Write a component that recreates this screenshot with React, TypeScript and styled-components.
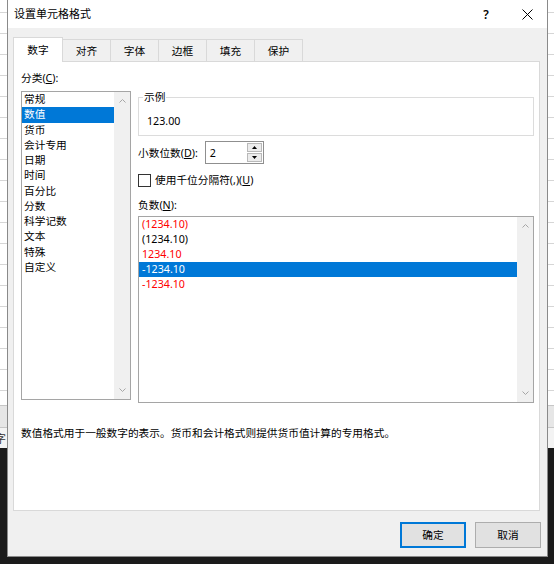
import React from "react";
import styled, { createGlobalStyle } from "styled-components";

const GlobalStyle = createGlobalStyle`
  html, body { margin: 0; padding: 0; }
  body {
    width: 554px;
    height: 564px;
    overflow: hidden;
    font-family: "Noto Sans", "Noto Sans CJK SC", sans-serif;
  }
`;

const Desktop = styled.div`
  position: relative;
  width: 554px;
  height: 564px;
  display: flex;
  flex-direction: column;
  overflow: hidden;
  background: #1b1b1b;
`;

const Sheet = styled.div`
  height: 405px;
  background: repeating-linear-gradient(
    to bottom,
    #ffffff 0 12px,
    #d6d6d6 12px 13px,
    #ffffff 13px 21px
  );
`;

const SheetTabs = styled.div`
  height: 21px;
  background: #e6e6e6;
  border-top: 1px solid #c6c6c6;
  border-bottom: 1px solid #c6c6c6;
`;

const StatusRow = styled.div`
  height: 20px;
  background: #f3f3f3;
  display: flex;
  align-items: center;
  font-size: 11px;
  color: #333;
`;

const StatusText = styled.span`
  margin-left: -5px;
`;

const Dialog = styled.div`
  position: absolute;
  left: 7px;
  top: 0;
  width: 541px;
  height: 557px;
  box-sizing: border-box;
  border: 1px solid #8a8a8a;
  border-top: none;
  background: #f0f0f0;
  display: flex;
  flex-direction: column;
  font-family: "Noto Sans", "Noto Sans CJK SC", sans-serif;
  font-size: 10.7px;
  color: #000;
`;

const TitleBar = styled.div`
  height: 28px;
  flex: none;
  background: #ffffff;
  display: flex;
  align-items: center;
  padding-left: 6px;
`;

const Title = styled.div`
  flex: 1;
  font-size: 11px;
  line-height: 16px;
`;

const TitleButton = styled.div<{ $w: number }>`
  width: ${(p) => p.$w}px;
  height: 28px;
  display: flex;
  align-items: center;
  justify-content: center;
  font-size: 12px;
  font-weight: 600;
`;

const TabStrip = styled.div`
  display: flex;
  align-items: flex-end;
  height: 25px;
  margin: 9px 0 -1px 5px;
  position: relative;
  z-index: 1;
`;

const Tab = styled.div<{ $active?: boolean }>`
  box-sizing: border-box;
  width: ${(p) => (p.$active ? 50 : 49)}px;
  height: ${(p) => (p.$active ? 25 : 23)}px;
  margin-left: -1px;
  &:first-child { margin-left: 0; }
  border: 1px solid #d9d9d9;
  border-bottom: ${(p) => (p.$active ? "none" : "1px solid #d9d9d9")};
  background: ${(p) => (p.$active ? "#ffffff" : "#f0f0f0")};
  display: flex;
  align-items: center;
  justify-content: center;
  padding-top: ${(p) => (p.$active ? 0 : 1)}px;
  line-height: 16px;
`;

const Panel = styled.div`
  box-sizing: border-box;
  height: 450px;
  margin: 0 7px 0 5px;
  border: 1px solid #d9d9d9;
  background: #ffffff;
  padding: 8px 5px 0 7px;
  display: flex;
  flex-direction: column;
`;

const Columns = styled.div`
  display: flex;
  align-items: flex-start;
  gap: 7px;
`;

const LeftCol = styled.div`
  width: 110px;
  display: flex;
  flex-direction: column;
`;

const RightCol = styled.div`
  flex: 1;
  min-width: 0;
  padding-top: 19px;
  display: flex;
  flex-direction: column;
`;

const FieldLabel = styled.div<{ $mt?: number }>`
  line-height: 16px;
  height: 16px;
  margin-top: ${(p) => p.$mt ?? 0}px;
  white-space: nowrap;
`;

const ListBox = styled.div<{ $h: number; $mt: number }>`
  box-sizing: border-box;
  height: ${(p) => p.$h}px;
  margin-top: ${(p) => p.$mt}px;
  border: 1px solid #a5a5a5;
  background: #ffffff;
  display: flex;
`;

const Items = styled.div`
  flex: 1;
  min-width: 0;
  overflow: hidden;
`;

const Item = styled.div<{ $selected?: boolean; $red?: boolean; $pad: number; $h: number }>`
  height: ${(p) => p.$h}px;
  line-height: ${(p) => p.$h}px;
  padding-left: ${(p) => p.$pad}px;
  white-space: nowrap;
  background: ${(p) => (p.$selected ? "#0078d7" : "transparent")};
  color: ${(p) => (p.$selected ? "#ffffff" : p.$red ? "#ff0000" : "#000000")};
`;

const ScrollTrack = styled.div`
  width: 16px;
  flex: none;
  background: #f0f0f0;
  display: flex;
  flex-direction: column;
  align-items: center;
  justify-content: space-between;
  padding: 7px 0;
  box-sizing: border-box;
`;

const GroupBox = styled.fieldset`
  margin: 0;
  padding: 0 0 6px 0;
  border: 1px solid #dcdcdc;
  min-inline-size: 0;
`;

const GroupLegend = styled.legend`
  margin-left: 4px;
  padding: 0 1px;
  line-height: 16px;
  font-size: 10.7px;
`;

const SampleValue = styled.div`
  padding: 8px 0 0 8px;
  line-height: 16px;
`;

const SpinRow = styled.div`
  margin-top: 5px;
  height: 23px;
  display: flex;
  align-items: center;
  gap: 7px;
`;

const SpinBox = styled.div`
  box-sizing: border-box;
  width: 59px;
  height: 23px;
  border: 1px solid #8f8f8f;
  background: #ffffff;
  display: flex;
  align-items: stretch;
  padding: 0 1px 0 4px;
`;

const SpinValue = styled.div`
  flex: 1;
  display: flex;
  align-items: center;
  line-height: 16px;
`;

const SpinButtons = styled.div`
  width: 15px;
  display: flex;
  flex-direction: column;
  padding: 1px 0;
  gap: 1px;
`;

const SpinButton = styled.div`
  flex: 1;
  box-sizing: border-box;
  border: 1px solid #b9b9b9;
  background: #ececec;
  display: flex;
  align-items: center;
  justify-content: center;
`;

const CheckRow = styled.div`
  margin-top: 8px;
  height: 16px;
  display: flex;
  align-items: center;
  gap: 4px;
  line-height: 16px;
`;

const CheckBox = styled.div`
  box-sizing: border-box;
  width: 13px;
  height: 13px;
  border: 1px solid #333333;
  background: #ffffff;
`;

const Description = styled.div`
  margin-top: 22px;
  line-height: 16px;
  white-space: nowrap;
`;

const ButtonRow = styled.div`
  display: flex;
  justify-content: flex-end;
  gap: 9px;
  padding: 11px 6px 0 0;
`;

const DialogButton = styled.div<{ $primary?: boolean }>`
  box-sizing: border-box;
  width: 66px;
  height: 26px;
  background: #e1e1e1;
  border: ${(p) => (p.$primary ? "2px solid #0078d7" : "1px solid #adadad")};
  display: flex;
  align-items: center;
  justify-content: center;
  line-height: 16px;
`;

const Key = styled.u`
  text-decoration: underline;
  text-underline-offset: 1px;
`;

const Chevron = ({ up }: { up?: boolean }) => (
  <svg width="7" height="4" viewBox="0 0 7 4">
    <polyline
      points={up ? "0.5,3.5 3.5,0.5 6.5,3.5" : "0.5,0.5 3.5,3.5 6.5,0.5"}
      fill="none"
      stroke="#a6a6a6"
      strokeWidth="1"
    />
  </svg>
);

const Triangle = ({ up }: { up?: boolean }) => (
  <svg width="5" height="3" viewBox="0 0 5 3">
    <polygon points={up ? "0,3 5,3 2.5,0" : "0,0 5,0 2.5,3"} fill="#000" />
  </svg>
);

const CloseIcon = () => (
  <svg width="11" height="11" viewBox="0 0 11 11">
    <path d="M0.5 0.5 L10.5 10.5 M10.5 0.5 L0.5 10.5" stroke="#000" strokeWidth="1" />
  </svg>
);

const tabs = ["数字", "对齐", "字体", "边框", "填充", "保护"];
const categories = [
  "常规",
  "数值",
  "货币",
  "会计专用",
  "日期",
  "时间",
  "百分比",
  "分数",
  "科学记数",
  "文本",
  "特殊",
  "自定义",
];
const negatives = [
  { text: "(1234.10)", red: true },
  { text: "(1234.10)", red: false },
  { text: "1234.10", red: true },
  { text: "-1234.10", red: false, selected: true },
  { text: "-1234.10", red: true },
];

export default function App() {
  return (
    <>
      <GlobalStyle />
      <Desktop lang="zh-CN">
        <Sheet />
        <SheetTabs />
        <StatusRow>
          <StatusText>字</StatusText>
        </StatusRow>
        <Dialog>
          <TitleBar>
            <Title>设置单元格格式</Title>
            <TitleButton $w={42}>?</TitleButton>
            <TitleButton $w={40}>
              <CloseIcon />
            </TitleButton>
          </TitleBar>
          <TabStrip>
            {tabs.map((t, i) => (
              <Tab key={t} $active={i === 0}>
                {t}
              </Tab>
            ))}
          </TabStrip>
          <Panel>
            <Columns>
              <LeftCol>
                <FieldLabel>
                  分类(<Key>C</Key>):
                </FieldLabel>
                <ListBox $h={309} $mt={5}>
                  <Items>
                    {categories.map((c, i) => (
                      <Item key={c} $pad={2} $h={15.25} $selected={i === 1}>
                        {c}
                      </Item>
                    ))}
                  </Items>
                  <ScrollTrack>
                    <Chevron up />
                    <Chevron />
                  </ScrollTrack>
                </ListBox>
              </LeftCol>
              <RightCol>
                <GroupBox>
                  <GroupLegend>示例</GroupLegend>
                  <SampleValue>123.00</SampleValue>
                </GroupBox>
                <SpinRow>
                  <FieldLabel>
                    小数位数(<Key>D</Key>):
                  </FieldLabel>
                  <SpinBox>
                    <SpinValue>2</SpinValue>
                    <SpinButtons>
                      <SpinButton>
                        <Triangle up />
                      </SpinButton>
                      <SpinButton>
                        <Triangle />
                      </SpinButton>
                    </SpinButtons>
                  </SpinBox>
                </SpinRow>
                <CheckRow>
                  <CheckBox />
                  <span>
                    使用千位分隔符(,)(<Key>U</Key>)
                  </span>
                </CheckRow>
                <FieldLabel $mt={9}>
                  负数(<Key>N</Key>):
                </FieldLabel>
                <ListBox $h={187} $mt={3}>
                  <Items>
                    {negatives.map((n, i) => (
                      <Item key={i} $pad={3} $h={15} $red={n.red} $selected={n.selected}>
                        {n.text}
                      </Item>
                    ))}
                  </Items>
                  <ScrollTrack>
                    <Chevron up />
                    <Chevron />
                  </ScrollTrack>
                </ListBox>
              </RightCol>
            </Columns>
            <Description>
              数值格式用于一般数字的表示。货币和会计格式则提供货币值计算的专用格式。
            </Description>
          </Panel>
          <ButtonRow>
            <DialogButton $primary>确定</DialogButton>
            <DialogButton>取消</DialogButton>
          </ButtonRow>
        </Dialog>
      </Desktop>
    </>
  );
}
